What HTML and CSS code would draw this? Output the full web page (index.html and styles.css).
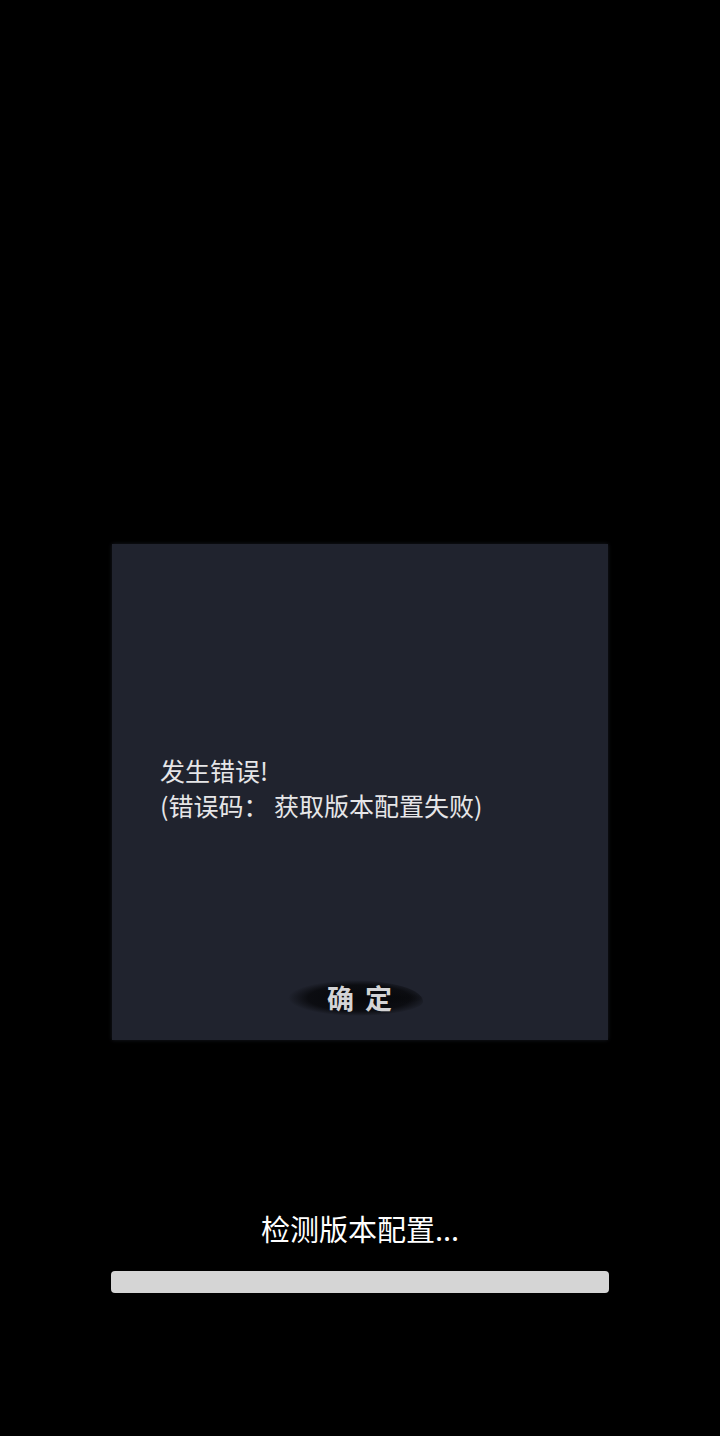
FILE: index.html
```html
<!DOCTYPE html>
<html lang="zh-CN">
<head>
<meta charset="utf-8">
<link rel="stylesheet" href="styles.css">
</head>
<body>
<div class="screen">
  <div class="dialog">
    <div class="message">
      <div class="line">发生错误!</div>
      <div class="line">(错误码： 获取版本配置失败)</div>
    </div>
    <div class="actions">
      <div class="brush-btn"><span class="brush"></span><span class="brush-tail"></span><span class="label">确定</span></div>
    </div>
  </div>
  <div class="loading">
    <div class="status">检测版本配置...</div>
    <div class="bar"></div>
  </div>
</div>
</body>
</html>
```
FILE: styles.css
```css
html, body {
  margin: 0;
  padding: 0;
  background: #000;
}
body {
  font-family: "Noto Sans CJK SC", "Noto Sans", sans-serif;
  color: #fff;
}
.screen {
  width: 720px;
  height: 1436px;
  display: flex;
  flex-direction: column;
  align-items: center;
  padding-top: 544px;
  box-sizing: border-box;
}
.dialog {
  width: 496px;
  height: 496px;
  background: #20232e;
  box-shadow: 0 0 4px rgba(40, 44, 56, 0.6);
  box-sizing: border-box;
  padding: 209px 48px 0 48px;
  display: flex;
  flex-direction: column;
}
.message {
  color: #e6e6e8;
  font-size: 25px;
  line-height: 35px;
}
.line {
  white-space: nowrap;
}
.actions {
  margin-top: 155px;
  display: flex;
  justify-content: center;
}
.brush-btn {
  position: relative;
  width: 146px;
  height: 40px;
  margin-left: -1px;
  display: flex;
  align-items: center;
  justify-content: center;
}
.brush {
  position: absolute;
  left: -6px;
  top: 2px;
  width: 142px;
  height: 36px;
  background:
    radial-gradient(ellipse 50% 50% at 55% 50%, rgba(6,7,10,0.98) 0%, rgba(10,11,15,0.92) 72%, rgba(20,22,30,0) 100%);
  border-radius: 40% 50% 50% 45% / 50% 60% 40% 50%;
}
.brush-tail {
  position: absolute;
  right: -4px;
  top: 14px;
  width: 64px;
  height: 12px;
  background: radial-gradient(ellipse 50% 50% at 30% 50%, rgba(8,9,12,0.9) 0%, rgba(20,22,30,0) 100%);
}
.label {
  position: relative;
  font-weight: 700;
  font-size: 27px;
  letter-spacing: 11px;
  margin-right: -11px;
  color: #d4d4d6;
  line-height: 40px;
}
.loading {
  margin-top: 167px;
  display: flex;
  flex-direction: column;
  align-items: center;
}
.status {
  font-size: 29px;
  line-height: 42px;
  color: #fff;
}
.bar {
  margin-top: 22px;
  width: 498px;
  height: 22px;
  background: #d5d5d5;
  border-radius: 4px;
}
```
